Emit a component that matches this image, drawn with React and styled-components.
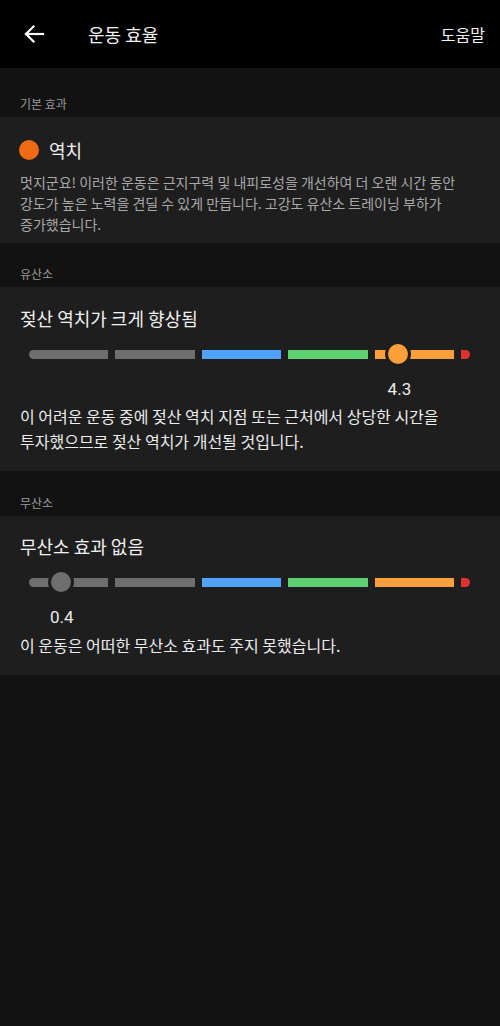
import React from 'react';
import styled, { createGlobalStyle } from 'styled-components';

const GlobalStyle = createGlobalStyle`
  body {
    margin: 0;
    background: #121212;
    font-family: "Noto Sans CJK KR", "Noto Sans", sans-serif;
  }
`;

const Page = styled.div`
  width: 500px;
  min-height: 1026px;
  background: #121212;
`;

const Header = styled.div`
  height: 68px;
  background: #000;
  display: flex;
  align-items: center;
  padding: 0 15px 0 22px;
  box-sizing: border-box;
`;

const BackButton = styled.div`
  width: 24px;
  height: 24px;
  display: flex;
  align-items: center;
  justify-content: center;
`;

const Title = styled.div`
  margin-left: 42px;
  color: #f2f2f2;
  font-size: 18px;
  flex: 1;
`;

const HelpLink = styled.div`
  color: #f2f2f2;
  font-size: 16px;
`;

const SectionLabel = styled.div`
  padding: ${p => p.$top}px 20px 5px;
  font-size: 12px;
  line-height: 16px;
  color: #9a9a9a;
`;

const Card = styled.div`
  background: #1e1e1e;
  padding: ${p => p.$pad || '19px 20px 16px'};
`;

const EffectRow = styled.div`
  display: flex;
  align-items: center;
  height: 22px;
  margin-left: -1px;
`;

const Dot = styled.span`
  width: 20px;
  height: 20px;
  border-radius: 50%;
  background: #ef6a14;
  margin-right: 10px;
`;

const EffectName = styled.span`
  color: #f0f0f0;
  font-size: 18px;
`;

const MutedText = styled.p`
  margin: 11px 0 0;
  font-size: 14px;
  line-height: 21px;
  color: #a8a8a8;
`;

const CardTitle = styled.div`
  color: #f0f0f0;
  font-size: 18px;
  line-height: 24px;
`;

const Gauge = styled.div`
  position: relative;
  margin: ${p => p.$mt}px 0 0 9px;
  width: 441px;
`;

const Track = styled.div`
  height: 20px;
  display: grid;
  grid-template-columns: repeat(5, 1fr) 9px;
  column-gap: 7px;
  align-items: center;
`;

const Segment = styled.div`
  height: 9px;
  background: ${p => p.$color};
  border-radius: ${p => (p.$first ? '5px 0 0 5px' : p.$last ? '0 5px 5px 0' : '0')};
`;

const Thumb = styled.div`
  position: absolute;
  top: -3px;
  width: 20px;
  height: 20px;
  margin-left: -13px;
  border-radius: 50%;
  background: ${p => p.$color};
  border: 3px solid #1e1e1e;
`;

const ValueRow = styled.div`
  position: relative;
  height: 20px;
  margin-top: ${p => p.$mt}px;
  margin-left: 9px;
`;

const Value = styled.span`
  position: absolute;
  transform: translateX(-50%);
  color: #ececec;
  font-family: "Roboto", "Noto Sans", sans-serif;
  font-size: 17px;
  line-height: 20px;
`;

const BodyText = styled.p`
  margin: ${p => p.$mt}px 0 0;
  font-size: 16px;
  line-height: 25px;
  color: #ececec;
`;

const COLORS = ['#6e6e6e', '#6e6e6e', '#4fa3ff', '#5ecf72', '#ff9f3a', '#e03131'];
const SEG = 79.4;
const GAP = 7;

const valueToX = v => {
  const i = Math.min(Math.floor(v), 4);
  return i * (SEG + GAP) + (v - i) * SEG;
};

const EffectGauge = ({ value, mt, valueGap }) => {
  const x = valueToX(value);
  const color = COLORS[Math.min(Math.floor(value), 4)];
  return (
    <>
      <Gauge $mt={mt}>
        <Track>
          {COLORS.map((c, i) => (
            <Segment key={i} $color={c} $first={i === 0} $last={i === COLORS.length - 1} />
          ))}
        </Track>
        <Thumb $color={color} style={{ left: x }} />
      </Gauge>
      <ValueRow $mt={valueGap}>
        <Value style={{ left: x + 1 }}>{value.toFixed(1)}</Value>
      </ValueRow>
    </>
  );
};

const ArrowIcon = () => (
  <svg width="22" height="22" viewBox="0 0 22 22" fill="none" stroke="#fff" strokeWidth="2.2" strokeLinecap="square">
    <path d="M20 11H3" />
    <path d="M10.5 3.5L3 11l7.5 7.5" />
  </svg>
);

export default function App() {
  return (
    <Page>
      <GlobalStyle />
      <Header>
        <BackButton><ArrowIcon /></BackButton>
        <Title>운동 효율</Title>
        <HelpLink>도움말</HelpLink>
      </Header>

      <SectionLabel $top={28}>기본 효과</SectionLabel>
      <Card $pad="22px 20px 8px">
        <EffectRow>
          <Dot />
          <EffectName>역치</EffectName>
        </EffectRow>
        <MutedText>
          멋지군요! 이러한 운동은 근지구력 및 내피로성을 개선하여 더 오랜 시간 동안
          <br />
          강도가 높은 노력을 견딜 수 있게 만듭니다. 고강도 유산소 트레이닝 부하가
          <br />
          증가했습니다.
        </MutedText>
      </Card>

      <SectionLabel $top={23}>유산소</SectionLabel>
      <Card $pad="19px 20px 17px">
        <CardTitle>젖산 역치가 크게 향상됨</CardTitle>
        <EffectGauge value={4.3} mt={14} valueGap={15} />
        <BodyText $mt={5}>
          이 어려운 운동 중에 젖산 역치 지점 또는 근처에서 상당한 시간을
          <br />
          투자했으므로 젖산 역치가 개선될 것입니다.
        </BodyText>
      </Card>

      <SectionLabel $top={24}>무산소</SectionLabel>
      <Card $pad="18px 20px 17px">
        <CardTitle>무산소 효과 없음</CardTitle>
        <EffectGauge value={0.4} mt={14} valueGap={15} />
        <BodyText $mt={6}>이 운동은 어떠한 무산소 효과도 주지 못했습니다.</BodyText>
      </Card>
    </Page>
  );
}
